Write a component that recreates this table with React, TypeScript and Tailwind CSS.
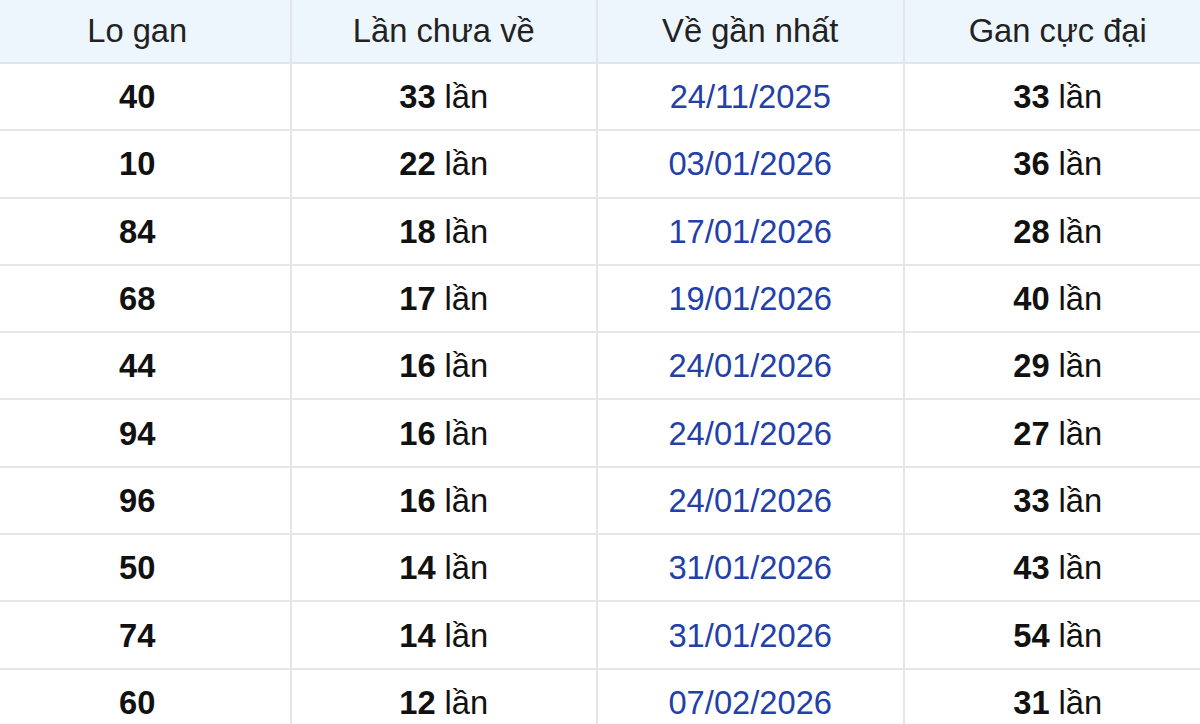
import React from "react";

const rows: [string, string, string, string][] = [
  ["40", "33", "24/11/2025", "33"],
  ["10", "22", "03/01/2026", "36"],
  ["84", "18", "17/01/2026", "28"],
  ["68", "17", "19/01/2026", "40"],
  ["44", "16", "24/01/2026", "29"],
  ["94", "16", "24/01/2026", "27"],
  ["96", "16", "24/01/2026", "33"],
  ["50", "14", "31/01/2026", "43"],
  ["74", "14", "31/01/2026", "54"],
  ["60", "12", "07/02/2026", "31"],
];

export default function App() {
  return (
    <div className="w-[1200px] h-[724px] overflow-hidden bg-white" style={{ fontFamily: '"Liberation Sans", Arial, sans-serif' }}>
      <div className="ml-[-15px] w-[1226px]">
        <div className="grid grid-cols-4 h-[64px] bg-[#eef6fd] border-b-2 border-[#e2e6ea] text-[32.7px] text-[#222]">
          {["Lo gan", "Lần chưa về", "Về gần nhất", "Gan cực đại"].map((h, i) => (
            <div key={h} className={`flex items-center justify-center ${i < 3 ? "border-r-2 border-[#e2e6ea]" : ""}`}>
              {h}
            </div>
          ))}
        </div>
        {rows.map((r, idx) => (
          <div key={idx} className="grid grid-cols-4 h-[67.3px] border-b-2 border-[#e6e6e6] text-[32.7px] text-[#111]">
            <div className="flex items-center justify-center border-r-2 border-[#e6e6e6] font-bold">{r[0]}</div>
            <div className="flex items-center justify-center border-r-2 border-[#e6e6e6]">
              <span className="font-bold">{r[1]}</span>
              <span className="ml-[9px]">lần</span>
            </div>
            <div className="flex items-center justify-center border-r-2 border-[#e6e6e6] text-[#2240a8]">{r[2]}</div>
            <div className="flex items-center justify-center">
              <span className="font-bold">{r[3]}</span>
              <span className="ml-[9px]">lần</span>
            </div>
          </div>
        ))}
      </div>
    </div>
  );
}
